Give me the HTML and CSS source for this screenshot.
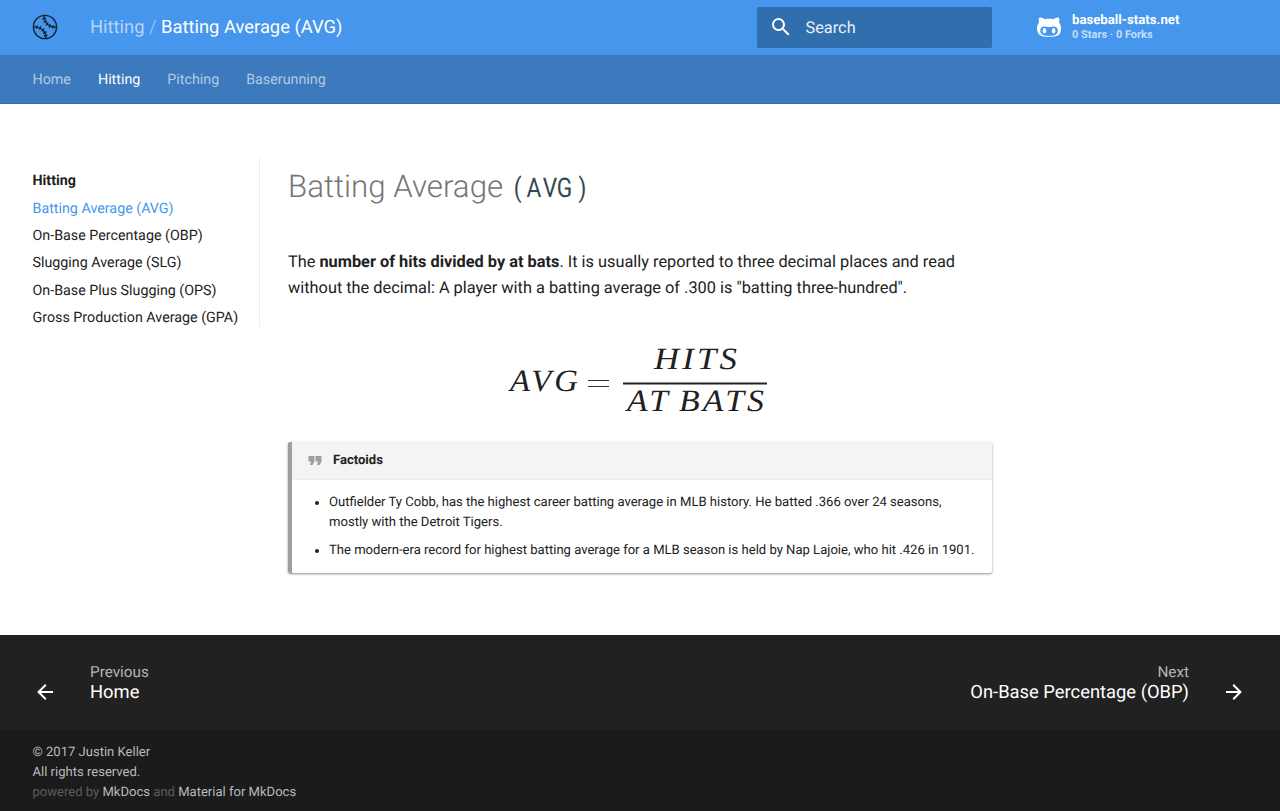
FILE: index.html
```
<!DOCTYPE html>
<html lang="en">
<head>
<meta charset="utf-8">
<title>Batting Average (AVG)</title>
<link rel="stylesheet" href="styles.css">
</head>
<body>
<header class="header">
  <a class="logo"><svg width="26" height="26" viewBox="0 0 26 26" fill="none" stroke="#10202d" stroke-width="1.4"><circle cx="13" cy="13" r="11.6"/><path stroke-width="1.3" d="M12 1.500C12 8 16 13 24.500 13.200M1.500 12.800C10 13 14 18 14 24.500"/><path stroke-width="1.300" d="M10.400 5l3.600-.8M11.600 8.500l3.200-2M14 11.600l2.200-3M17.200 13.800l1.200-3.500M20.800 14.800l.4-3.500M4.800 14.700l.4-3.500M7.600 15.700l1.200-3.500M9.800 17.400l2.200-3M11.200 19.600l3.200-2M12 22l3.600-.8"/></svg></a>
  <div class="title"><span class="parent">Hitting</span><span class="slash">/</span><span>Batting Average (AVG)</span></div>
  <div class="search"><svg width="24" height="24" viewBox="0 0 24 24" fill="#fff"><path d="M9.500 3A6.500 6.500 0 0 1 16 9.500c0 1.610-.59 3.090-1.560 4.230l.27.270h.79l5 5-1.500 1.500-5-5v-.79l-.27-.27A6.516 6.516 0 0 1 9.500 16a6.500 6.500 0 0 1 0-13m0 2C7 5 5 7 5 9.500S7 14 9.500 14 14 12 14 9.500 12 5 9.500 5z"/></svg><span>Search</span></div>
  <a class="source"><svg width="24" height="20" viewBox="16 54 480 400" fill="#fff"><path d="M202.100 328.700c0 20.900-10.900 55.100-36.700 55.100s-36.700-34.200-36.700-55.100 10.900-55.100 36.700-55.100 36.700 34.200 36.700 55.100zM496 278.200c0 31.900-3.200 65.700-17.500 95-37.900 76.600-142.100 74.800-216.700 74.800-75.800 0-186.200 2.700-225.600-74.800-14.600-29-20.200-63.100-20.200-95 0-41.900 13.900-81.500 41.500-113.600-5.200-15.800-7.700-32.400-7.700-48.800 0-21.500 4.900-32.300 14.600-51.800 45.300 0 74.300 9 108.800 36 29-6.900 58.800-10 88.700-10 27 0 54.200 2.900 80.400 9.200 34-26.700 63-35.200 107.800-35.200 9.800 19.500 14.600 30.300 14.600 51.800 0 16.400-2.600 32.700-7.700 48.200 27.500 32.400 39 72.300 39 114.200zm-64.300 50.500c0-43.900-26.700-82.600-73.500-82.600-18.900 0-37 3.400-56 6-14.900 2.300-29.800 3.200-45.100 3.200-15.200 0-30.100-.9-45.100-3.200-18.700-2.600-37-6-56-6-46.800 0-73.500 38.700-73.500 82.600 0 87.800 80.400 101.300 150.400 101.300h48.200c70.300 0 150.600-13.400 150.600-101.300zm-82.600-55.100c-25.800 0-36.700 34.200-36.700 55.100s10.900 55.100 36.700 55.100 36.700-34.200 36.700-55.100-10.900-55.100-36.700-55.100z"/></svg>
    <span class="repo"><b>baseball-stats.net</b><small>0 Stars · 0 Forks</small></span></a>
</header>
<nav class="tabs"><a>Home</a><a class="active">Hitting</a><a>Pitching</a><a>Baserunning</a></nav>
<div class="container">
  <nav class="sidebar">
    <b>Hitting</b><a class="active">Batting Average (AVG)</a><a>On-Base Percentage (OBP)</a><a>Slugging Average (SLG)</a><a>On-Base Plus Slugging (OPS)</a><a>Gross Production Average (GPA)</a>
  </nav>
  <article class="article">
    <h1>Batting Average <svg class="code" width="75" height="36" viewBox="0 0 75 36"><text transform="scale(.84 1)" x="1 16 35.500 52 78" y="28">(AVG)</text></svg></h1>
    <p>The <b>number of hits divided by at bats</b>. It is usually reported to three decimal places and read without the decimal: A player with a batting average of .300 is "batting three-hundred".</p>
    <svg class="formula" width="260" height="72" viewBox="0 0 260 72">
      <text x="2" y="46" textLength="71" lengthAdjust="spacingAndGlyphs">AVG</text><path d="M80 35.500h21M80 41.500h21" stroke="#333" stroke-width="1.200"/>
      <text x="146" y="24" textLength="86" lengthAdjust="spacingAndGlyphs">HITS</text><path d="M115 38.500h144" stroke="#222" stroke-width="2"/>
      <text x="119" y="66" textLength="44" lengthAdjust="spacingAndGlyphs">AT</text><text x="171" y="66" textLength="88" lengthAdjust="spacingAndGlyphs">BATS</text>
    </svg>
    <section class="quote">
      <div class="quote-title"><svg width="14" height="10" viewBox="0 0 14 10" fill="#9e9e9e"><path d="M2 9h2.500l2-3.500V0h-6v5.500H3zM9 9h2.500l2-3.500V0h-6v5.500H10z"/></svg><span>Factoids</span></div>
      <ul><li>Outfielder Ty Cobb, has the highest career batting average in MLB history. He batted .366 over 24 seasons, mostly with the Detroit Tigers.</li><li>The modern-era record for highest batting average for a MLB season is held by Nap Lajoie, who hit .426 in 1901.</li></ul>
    </section>
  </article>
</div>
<footer>
  <div class="pager">
    <a class="link"><svg width="24" height="24" viewBox="0 0 24 24" fill="#fff"><path d="M20 11v2H8l5.500 5.500-1.420 1.420L4.160 12l7.920-7.920L13.500 5.500 8 11h12z"/></svg><span class="label"><small>Previous</small>Home</span></a>
    <a class="link next"><span class="label"><small>Next</small>On-Base Percentage (OBP)</span><svg width="24" height="24" viewBox="0 0 24 24" fill="#fff"><path d="M4 11v2h12l-5.500 5.500 1.420 1.420L19.840 12l-7.920-7.920L10.500 5.500 16 11H4z"/></svg></a>
  </div>
  <div class="meta"><div>© 2017 Justin Keller</div><div>All rights reserved.</div><div class="powered">powered by <a>MkDocs</a> and <a>Material for MkDocs</a></div></div>
</footer>
</body>
</html>
```
FILE: styles.css
```
* { box-sizing: border-box; }
body { margin: 0; font-family: Roboto, sans-serif; font-size: 16.340px; color: #212121; background: #fff; text-rendering: geometricPrecision; }
svg { display: block; flex: none; }
.header { display: flex; align-items: center; height: 55px; padding: 0 32px 1px; background: #4596ec; color: #fff; }
.logo { width: 58px; height: 26px; }
.title { width: 666.500px; padding-top: 1px; font-size: 18.370px; line-height: 24px; white-space: nowrap; }
.parent { color: #b5d5f8; }
.slash { color: #8fc0f4; margin: 0 4.500px; }
.search { display: flex; align-items: center; gap: 13px; width: 235.500px; height: 41px; padding-left: 12px; border-radius: 2px; background: #316eae; font-size: 16.330px; color: #eaf1f8; }
.source { display: flex; align-items: center; gap: 11px; margin-left: 45px; }
.repo { display: flex; flex-direction: column; padding-top: 1px; font-size: 13.200px; line-height: 14px; }
.repo small { font-size: 11px; line-height: 14px; font-weight: 700; color: #c7dff9; }
.tabs { display: flex; align-items: center; gap: 27px; height: 48.500px; padding: 2px 32.500px 0; background: #3c7abd; border-bottom: 1px solid #2e6fb8; font-size: 14.290px; color: #b1cae5; }
.tabs .active { color: #fff; }
.container { display: flex; height: 531.500px; padding: 54.500px 32px 0; }
.sidebar { display: flex; flex-direction: column; width: 228px; height: 169px; padding: 13.200px 0 0 .5px; border-right: 1px solid #ededed; font-size: 14.290px; line-height: 20px; gap: 7.400px; white-space: nowrap; }
.sidebar .active { color: #4596ec; }
.article { width: 704px; margin-left: 28px; }
h1 { display: flex; align-items: center; gap: 10px; height: 40px; margin: 9px 0 42px; font-size: 31.250px; font-weight: 300; line-height: 40px; color: #757575; white-space: nowrap; }
.code { font-size: 27px; font-weight: 400; fill: #37474f; }
.article p { margin: 0; line-height: 25.600px; }
.formula { overflow: visible; margin: 45px 0 0 220px; font-family: "Liberation Serif", serif; font-style: italic; font-size: 31px; letter-spacing: 2.800px; fill: #212121; }
.quote { margin-top: 25px; height: 131px; border-left: 4px solid #9e9e9e; border-radius: 2px; font-size: 13.070px; line-height: 20.480px; box-shadow: 0 1px 2px rgba(0,0,0,.35), 0 1px 4px rgba(0,0,0,.12); }
.quote-title { display: flex; align-items: center; gap: 12px; height: 38px; padding: 1px 0 0 15px; border-bottom: 1px solid #ececec; background: #f4f4f4; font-weight: 700; }
.quote-title svg { margin-left: 1px; margin-right: -1px; }
.quote ul { margin: 12.700px 0 0; padding: 0 12px 0 37px; }
.quote li + li { margin-top: 7px; }
.pager { display: flex; justify-content: space-between; height: 94px; padding: 26px 34px 0 33px; background: #212121; color: #fff; }
.link { display: flex; height: 42px; align-items: flex-end; gap: 33px; }
.link svg { position: relative; top: 1px; }
.label { display: flex; flex-direction: column; font-size: 18.370px; line-height: 21px; }
.label small { font-size: 15.300px; line-height: 20px; color: #b5b5b5; }
.next { text-align: right; }
.meta { height: 82px; padding: 13.500px 32.500px 0; background: #1b1b1b; font-size: 13.060px; line-height: 20.480px; color: #bababa; }
.powered { color: #5c5c5c; }
.powered a { color: #bababa; }
```
